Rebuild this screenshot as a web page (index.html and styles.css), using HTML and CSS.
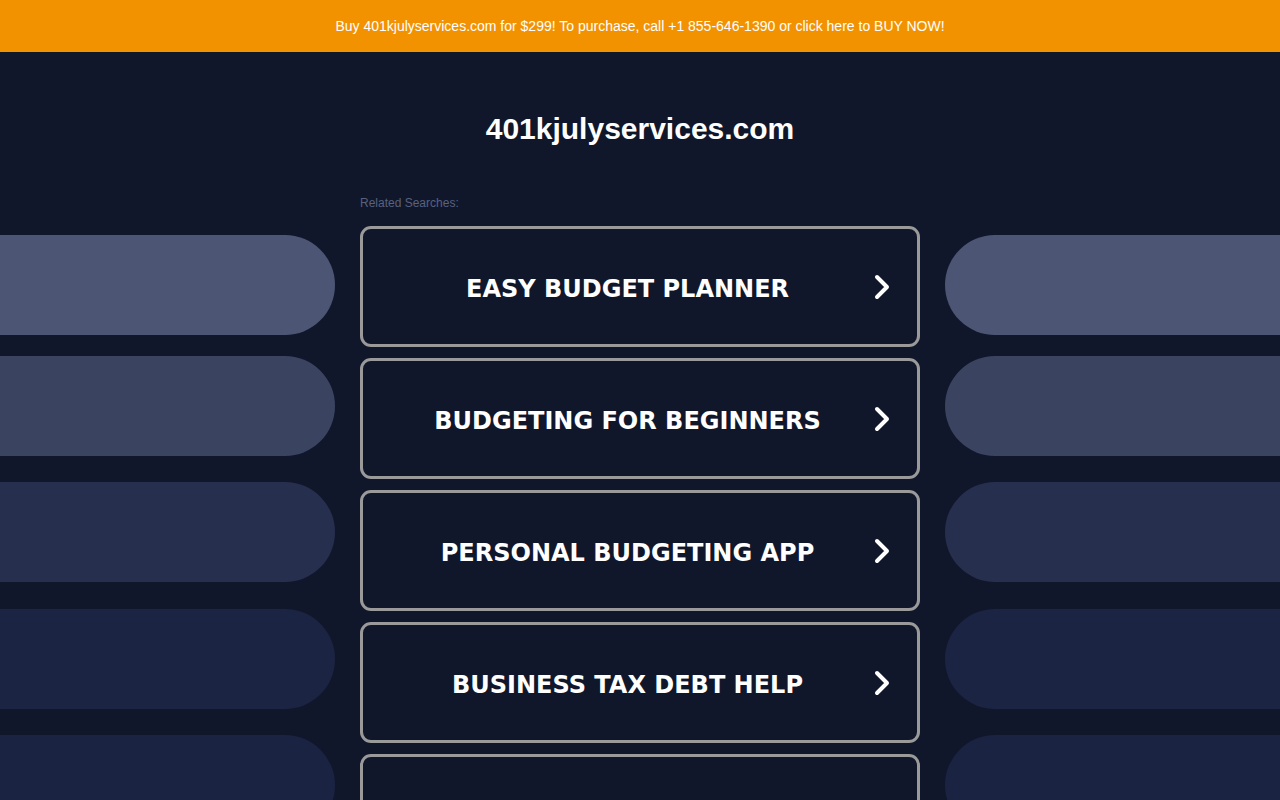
FILE: index.html
```html
<!DOCTYPE html>
<html lang="en">
<head>
<meta charset="utf-8">
<title>401kjulyservices.com</title>
<link rel="stylesheet" href="styles.css">
</head>
<body>
<div class="topbar">Buy 401kjulyservices.com for $299! To purchase, call +1 855-646-1390 or click here to BUY NOW!</div>
<div class="layout">
  <aside class="side side-left">
    <div class="pill p1"></div>
    <div class="pill p2"></div>
    <div class="pill p3"></div>
    <div class="pill p4"></div>
    <div class="pill p5"></div>
  </aside>
  <main class="center">
    <h1 class="domain">401kjulyservices.com</h1>
    <div class="related">Related Searches:</div>
    <a class="card" href="#"><span class="label">EASY BUDGET PLANNER</span><svg class="chev" viewBox="0 0 16 26"><path d="M3 3 L13 13 L3 23"/></svg></a>
    <a class="card" href="#"><span class="label">BUDGETING FOR BEGINNERS</span><svg class="chev" viewBox="0 0 16 26"><path d="M3 3 L13 13 L3 23"/></svg></a>
    <a class="card" href="#"><span class="label">PERSONAL BUDGETING APP</span><svg class="chev" viewBox="0 0 16 26"><path d="M3 3 L13 13 L3 23"/></svg></a>
    <a class="card" href="#"><span class="label">BUSINESS TAX DEBT HELP</span><svg class="chev" viewBox="0 0 16 26"><path d="M3 3 L13 13 L3 23"/></svg></a>
    <a class="card" href="#"><span class="label"></span></a>
  </main>
  <aside class="side side-right">
    <div class="pill p1"></div>
    <div class="pill p2"></div>
    <div class="pill p3"></div>
    <div class="pill p4"></div>
    <div class="pill p5"></div>
  </aside>
</div>
</body>
</html>
```
FILE: styles.css
```css
html, body {
  margin: 0;
  padding: 0;
}
body {
  background: #11172b;
  font-family: "Liberation Sans", Arial, sans-serif;
  overflow: hidden;
}
.topbar {
  height: 52px;
  background: #f39200;
  color: #ffffff;
  font-size: 14px;
  display: flex;
  align-items: center;
  justify-content: center;
}
.layout {
  display: grid;
  grid-template-columns: 1fr 560px 1fr;
  column-gap: 25px;
}
.side {
  padding-top: 183px;
  display: flex;
  flex-direction: column;
}
.pill {
  height: 100px;
  margin-bottom: 26px;
}
.pill.p1 { margin-bottom: 21px; background: #4c5674; }
.pill.p2 { background: #3a4461; }
.pill.p3 { margin-bottom: 27px; background: #262f4e; }
.pill.p4 { background: #1c2443; }
.pill.p5 { background: #1b2343; }
.side-left .pill { border-radius: 0 50px 50px 0; }
.side-right .pill { border-radius: 50px 0 0 50px; }
.center {
  display: flex;
  flex-direction: column;
}
.domain {
  margin: 59px 0 0;
  font-size: 30px;
  line-height: 36px;
  font-weight: bold;
  color: #ffffff;
  text-align: center;
}
.related {
  margin-top: 49px;
  font-size: 12px;
  line-height: 14px;
  color: #58617e;
}
.related + .card { margin-top: 16px; }
.card {
  box-sizing: border-box;
  height: 121px;
  margin-bottom: 11px;
  border: 3px solid #9a9a9a;
  border-radius: 11px;
  display: flex;
  align-items: center;
  padding: 0 27px 0 18px;
  text-decoration: none;
  color: #ffffff;
}
.label {
  flex: 1;
  text-align: center;
  font-family: "DejaVu Sans", Verdana, sans-serif;
  font-weight: bold;
  font-size: 24px;
  padding-top: 4px;
}
.chev {
  width: 16px;
  height: 26px;
  flex: none;
}
.chev path {
  fill: none;
  stroke: #ffffff;
  stroke-width: 4;
  stroke-linecap: round;
  stroke-linejoin: round;
}
```
